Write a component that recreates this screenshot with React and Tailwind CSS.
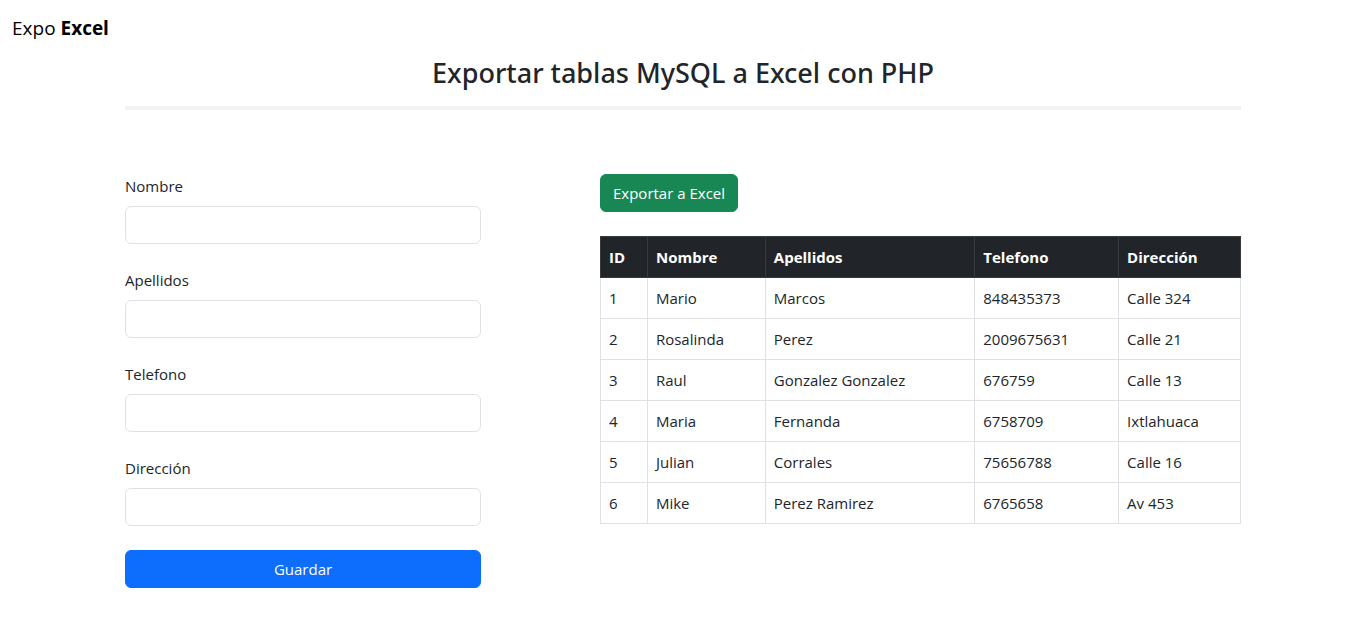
const fields = [
  { id: "nombre", label: "Nombre" },
  { id: "apellidos", label: "Apellidos" },
  { id: "telefono", label: "Telefono", type: "tel" },
  { id: "direccion", label: "Dirección" },
];

const columns = [
  { label: "ID", width: "w-[47px]" },
  { label: "Nombre", width: "w-[118px]" },
  { label: "Apellidos", width: "w-[210px]" },
  { label: "Telefono", width: "w-[144px]" },
  { label: "Dirección", width: "w-[122px]" },
];

const rows = [
  ["1", "Mario", "Marcos", "848435373", "Calle 324"],
  ["2", "Rosalinda", "Perez", "2009675631", "Calle 21"],
  ["3", "Raul", "Gonzalez Gonzalez", "676759", "Calle 13"],
  ["4", "Maria", "Fernanda", "6758709", "Ixtlahuaca"],
  ["5", "Julian", "Corrales", "75656788", "Calle 16"],
  ["6", "Mike", "Perez Ramirez", "6765658", "Av 453"],
];

function Field({ id, label, type = "text" }) {
  return (
    <div className="flex flex-col gap-2">
      <label htmlFor={id}>{label}</label>
      <input
        id={id}
        name={id}
        type={type}
        className="h-[38px] w-full rounded-md border border-[#dee2e6] bg-white px-3 outline-none focus:border-[#86b7fe]"
      />
    </div>
  );
}

function PeopleTable() {
  return (
    <table className="w-full border-collapse text-left">
      <thead className="bg-[#212529] text-white">
        <tr>
          {columns.map((c) => (
            <th key={c.label} scope="col" className={`${c.width} border border-[#373b3e] p-2 font-bold`}>
              {c.label}
            </th>
          ))}
        </tr>
      </thead>
      <tbody>
        {rows.map((row) => (
          <tr key={row[0]}>
            {row.map((cell, i) => (
              <td key={i} className="border border-[#dee2e6] p-2">
                {cell}
              </td>
            ))}
          </tr>
        ))}
      </tbody>
    </table>
  );
}

export default function App() {
  return (
    <div className="bg-white font-['Open_Sans','Noto_Sans',sans-serif] text-[15px] leading-6 font-normal text-[#212529]">
      <nav className="flex h-14 items-center px-3">
        <a href="#" className="text-[19px] leading-[30px] text-black">
          Expo <strong className="font-bold">Excel</strong>
        </a>
      </nav>
      <main className="mx-auto max-w-[1140px] px-3">
        <h1 className="text-center font-['Noto_Sans','Open_Sans',sans-serif] text-[27px] leading-[34px] font-medium">
          Exportar tablas MySQL a Excel con PHP
        </h1>
        <hr className="mt-4 border-t-4 border-[#f2f2f2]" />
        <div className="mt-16 grid grid-cols-12 gap-x-6">
          <form className="col-span-4 flex flex-col gap-6" onSubmit={(e) => e.preventDefault()}>
            {fields.map((f) => (
              <Field key={f.id} {...f} />
            ))}
            <button type="submit" className="h-[38px] w-full rounded-md border border-[#0d6efd] bg-[#0d6efd] text-white">
              Guardar
            </button>
          </form>
          <section className="col-span-7 col-start-6 flex flex-col items-start gap-6">
            <button type="button" className="h-[38px] rounded-md border border-[#198754] bg-[#198754] px-3 text-white">
              Exportar a Excel
            </button>
            <PeopleTable />
          </section>
        </div>
      </main>
    </div>
  );
}
